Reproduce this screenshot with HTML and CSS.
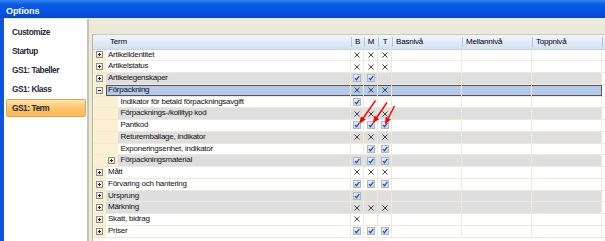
FILE: index.html
```html
<!DOCTYPE html>
<html>
<head>
<meta charset="utf-8">
<link rel="stylesheet" href="styles.css">
</head>
<body>
  <svg class="defs" width="0" height="0">
    <defs>
      <linearGradient id="cbg" x1="0" y1="0" x2="0" y2="1">
        <stop offset="0" stop-color="#eef2f8"/>
        <stop offset="1" stop-color="#c8d3e5"/>
      </linearGradient>
      <linearGradient id="tbg" x1="0" y1="0" x2="0" y2="1">
        <stop offset="0" stop-color="#ffffff"/>
        <stop offset="1" stop-color="#dcdcd4"/>
      </linearGradient>
      <symbol id="chk" viewBox="0 0 8 8">
        <rect x="0.5" y="0.5" width="7" height="7" fill="url(#cbg)" stroke="#aab7ce"/>
        <path d="M2 4.1 L3.5 5.8 L6.3 1.9" fill="none" stroke="#2350a6" stroke-width="1.3"/>
      </symbol>
      <symbol id="x" viewBox="0 0 6 6">
        <path d="M0.5 0.5 L5.5 5.5 M5.5 0.5 L0.5 5.5" stroke="#333" stroke-width="0.9"/>
      </symbol>
      <symbol id="plus" viewBox="0 0 7 7">
        <rect x="0.5" y="0.5" width="6" height="6" fill="url(#tbg)" stroke="#8c8c8c"/>
        <path d="M2 3.5 H5 M3.5 2 V5" stroke="#222"/>
      </symbol>
      <symbol id="minus" viewBox="0 0 7 7">
        <rect x="0.5" y="0.5" width="6" height="6" fill="url(#tbg)" stroke="#8c8c8c"/>
        <path d="M2 3.5 H5" stroke="#222"/>
      </symbol>
    </defs>
  </svg>

  <div class="titlebar">Options</div>

  <div class="main">
    <nav class="sidebar">
      <div class="nav-item">Customize</div>
      <div class="nav-item">Startup</div>
      <div class="nav-item">GS1: Tabeller</div>
      <div class="nav-item">GS1: Klass</div>
      <div class="nav-item active">GS1: Term</div>
    </nav>

    <div class="content">
      <div class="grid">
        <div class="hdr">
          <div class="h-term">Term</div>
          <div class="h-mid">B</div>
          <div class="h-mid">M</div>
          <div class="h-mid">T</div>
          <div>Basnivå</div>
          <div>Mellannivå</div>
          <div>Toppnivå</div>
          <div></div>
        </div>

        <div class="row">
          <div class="term"><span class="indent"><svg class="tog"><use href="#plus"/></svg></span><span class="label">Artikelidentitet</span></div>
          <div class="c"><svg class="ix"><use href="#x"/></svg></div>
          <div class="c"><svg class="ix"><use href="#x"/></svg></div>
          <div class="c"><svg class="ix"><use href="#x"/></svg></div>
          <div class="c"></div><div class="c"></div><div class="c last"></div><div class="fill"></div>
        </div>

        <div class="row">
          <div class="term"><span class="indent"><svg class="tog"><use href="#plus"/></svg></span><span class="label">Artikelstatus</span></div>
          <div class="c"><svg class="ix"><use href="#x"/></svg></div>
          <div class="c"><svg class="ix"><use href="#x"/></svg></div>
          <div class="c"><svg class="ix"><use href="#x"/></svg></div>
          <div class="c"></div><div class="c"></div><div class="c last"></div><div class="fill"></div>
        </div>

        <div class="row gray">
          <div class="term"><span class="indent"><svg class="tog"><use href="#plus"/></svg></span><span class="label">Artikelegenskaper</span></div>
          <div class="c"><svg class="cb"><use href="#chk"/></svg></div>
          <div class="c"><svg class="cb"><use href="#chk"/></svg></div>
          <div class="c"></div>
          <div class="c"></div><div class="c"></div><div class="c last"></div><div class="fill"></div>
        </div>

        <div class="row sel">
          <div class="term"><span class="indent"><svg class="tog"><use href="#minus"/></svg></span><span class="label">Förpackning</span></div>
          <div class="c"><svg class="ix"><use href="#x"/></svg></div>
          <div class="c"><svg class="ix"><use href="#x"/></svg></div>
          <div class="c"><svg class="ix"><use href="#x"/></svg></div>
          <div class="c"></div><div class="c"></div><div class="c last"></div><div class="fill"></div>
        </div>

        <div class="row child">
          <div class="term"><span class="indent"></span><span class="label">Indikator för betald förpackningsavgift</span></div>
          <div class="c"><svg class="cb"><use href="#chk"/></svg></div>
          <div class="c"></div>
          <div class="c"></div>
          <div class="c"></div><div class="c"></div><div class="c last"></div><div class="fill"></div>
        </div>

        <div class="row child gray">
          <div class="term"><span class="indent"></span><span class="label">Förpacknings-/kollityp kod</span></div>
          <div class="c"><svg class="ix"><use href="#x"/></svg></div>
          <div class="c"><svg class="ix"><use href="#x"/></svg></div>
          <div class="c"><svg class="ix"><use href="#x"/></svg></div>
          <div class="c"></div><div class="c"></div><div class="c last"></div><div class="fill"></div>
        </div>

        <div class="row child">
          <div class="term"><span class="indent"></span><span class="label">Pantkod</span></div>
          <div class="c"><svg class="cb"><use href="#chk"/></svg></div>
          <div class="c"><svg class="cb"><use href="#chk"/></svg></div>
          <div class="c"><svg class="cb"><use href="#chk"/></svg></div>
          <div class="c"></div><div class="c"></div><div class="c last"></div><div class="fill"></div>
        </div>

        <div class="row child gray">
          <div class="term"><span class="indent"></span><span class="label">Returemballage, indikator</span></div>
          <div class="c"><svg class="ix"><use href="#x"/></svg></div>
          <div class="c"><svg class="ix"><use href="#x"/></svg></div>
          <div class="c"><svg class="ix"><use href="#x"/></svg></div>
          <div class="c"></div><div class="c"></div><div class="c last"></div><div class="fill"></div>
        </div>

        <div class="row child">
          <div class="term"><span class="indent"></span><span class="label">Exponeringsenhet, indikator</span></div>
          <div class="c"></div>
          <div class="c"><svg class="cb"><use href="#chk"/></svg></div>
          <div class="c"><svg class="cb"><use href="#chk"/></svg></div>
          <div class="c"></div><div class="c"></div><div class="c last"></div><div class="fill"></div>
        </div>

        <div class="row child gray">
          <div class="term"><span class="indent"><svg class="tog"><use href="#plus"/></svg></span><span class="label">Förpackningsmaterial</span></div>
          <div class="c"><svg class="cb"><use href="#chk"/></svg></div>
          <div class="c"><svg class="cb"><use href="#chk"/></svg></div>
          <div class="c"><svg class="cb"><use href="#chk"/></svg></div>
          <div class="c"></div><div class="c"></div><div class="c last"></div><div class="fill"></div>
        </div>

        <div class="row">
          <div class="term"><span class="indent"><svg class="tog"><use href="#plus"/></svg></span><span class="label">Mått</span></div>
          <div class="c"><svg class="ix"><use href="#x"/></svg></div>
          <div class="c"><svg class="ix"><use href="#x"/></svg></div>
          <div class="c"><svg class="ix"><use href="#x"/></svg></div>
          <div class="c"></div><div class="c"></div><div class="c last"></div><div class="fill"></div>
        </div>

        <div class="row">
          <div class="term"><span class="indent"><svg class="tog"><use href="#plus"/></svg></span><span class="label">Förvaring och hantering</span></div>
          <div class="c"><svg class="cb"><use href="#chk"/></svg></div>
          <div class="c"><svg class="cb"><use href="#chk"/></svg></div>
          <div class="c"><svg class="cb"><use href="#chk"/></svg></div>
          <div class="c"></div><div class="c"></div><div class="c last"></div><div class="fill"></div>
        </div>

        <div class="row gray">
          <div class="term"><span class="indent"><svg class="tog"><use href="#plus"/></svg></span><span class="label">Ursprung</span></div>
          <div class="c"><svg class="cb"><use href="#chk"/></svg></div>
          <div class="c"></div>
          <div class="c"></div>
          <div class="c"></div><div class="c"></div><div class="c last"></div><div class="fill"></div>
        </div>

        <div class="row gray">
          <div class="term"><span class="indent"><svg class="tog"><use href="#plus"/></svg></span><span class="label">Märkning</span></div>
          <div class="c"><svg class="ix"><use href="#x"/></svg></div>
          <div class="c"><svg class="ix"><use href="#x"/></svg></div>
          <div class="c"><svg class="ix"><use href="#x"/></svg></div>
          <div class="c"></div><div class="c"></div><div class="c last"></div><div class="fill"></div>
        </div>

        <div class="row">
          <div class="term"><span class="indent"><svg class="tog"><use href="#plus"/></svg></span><span class="label">Skatt, bidrag</span></div>
          <div class="c"><svg class="ix"><use href="#x"/></svg></div>
          <div class="c"></div>
          <div class="c"></div>
          <div class="c"></div><div class="c"></div><div class="c last"></div><div class="fill"></div>
        </div>

        <div class="row">
          <div class="term"><span class="indent"><svg class="tog"><use href="#plus"/></svg></span><span class="label">Priser</span></div>
          <div class="c"><svg class="cb"><use href="#chk"/></svg></div>
          <div class="c"><svg class="cb"><use href="#chk"/></svg></div>
          <div class="c"><svg class="cb"><use href="#chk"/></svg></div>
          <div class="c"></div><div class="c"></div><div class="c last"></div><div class="fill"></div>
        </div>
      </div>
    </div>
  </div>

  <!-- annotation arrows drawn over the grid -->
  <svg class="arrows" width="605" height="241">
    <defs>
      <marker id="ah" markerWidth="7" markerHeight="6" refX="5" refY="3" orient="auto" markerUnits="userSpaceOnUse">
        <path d="M0 0 L7 3 L0 6 Z" fill="#f00"/>
      </marker>
    </defs>
    <line x1="375.5" y1="100.5" x2="360.5" y2="122" stroke="#f00" stroke-width="1.4" marker-end="url(#ah)"/>
    <line x1="387" y1="102.5" x2="374" y2="121.5" stroke="#f00" stroke-width="1.4" marker-end="url(#ah)"/>
    <line x1="394.5" y1="106" x2="386" y2="122.5" stroke="#f00" stroke-width="1.4" marker-end="url(#ah)"/>
  </svg>
</body>
</html>
```

FILE: styles.css
```css
* { box-sizing: border-box; }

html, body { margin: 0; }

body {
  position: relative;
  width: 605px;
  height: 241px;
  overflow: hidden;
  background: #ece9d8;
  font-family: "Liberation Sans", Arial, sans-serif;
}

.defs {
  position: absolute;
  width: 0;
  height: 0;
}

.titlebar {
  height: 18px;
  padding: 3px 0 0 6px;
  line-height: 16px;
  font-size: 9px;
  font-weight: bold;
  letter-spacing: -0.1px;
  color: #fff;
  background: linear-gradient(#3488f2, #0a5ae6 25%, #0453e0 70%, #0a47c8);
}

.main {
  display: flex;
  height: 223px;
  border-left: 4px solid #0d55de;
}

/* left menu */
.sidebar {
  width: 85px;
  flex: none;
  margin-top: 1px;
  padding-top: 4px;
  background: #fff;
  border-right: 2px solid #c7c4b4;
}

.nav-item {
  height: 18px;
  margin: 0 1px 1px 2px;
  padding-left: 5px;
  border: 1px solid transparent;
  border-radius: 2px;
  line-height: 16px;
  font-size: 8.3px;
  font-weight: bold;
  letter-spacing: -0.45px;
  color: #1f2a3c;
}

.nav-item.active {
  background: linear-gradient(#fee4a9, #fcc56c 50%, #fbb955);
  border-color: #e2a458;
}

/* term grid */
.content {
  flex: 1;
  padding: 16px 0 0 3px;
}

.grid {
  height: 100%;
  background: #fff;
  border-left: 1px solid #b9b6a4;
  border-top: 1px solid #c3c8d2;
  font-size: 8px;
  color: #111;
}

.hdr,
.row {
  display: grid;
  grid-template-columns: 258px 13px 14px 14px 70px 70px 70px 1fr;
}

.hdr {
  height: 14.5px;
  line-height: 13.5px;
  border-bottom: 1px solid #c9d5e6;
  background: linear-gradient(#f2f6fc, #d4e0f2);
  letter-spacing: -0.2px;
  color: #000;
}

.hdr > div {
  padding-left: 4px;
  white-space: nowrap;
  background: linear-gradient(#b3c4de, #b3c4de) no-repeat 0 50% / 1px 10px;
}

.hdr > .h-term {
  padding-left: 17px;
  background: none;
}

.hdr > .h-mid {
  padding-left: 0;
  text-align: center;
}

.row {
  height: 11.75px;
  line-height: 10.75px;
  border-bottom: 1px solid #efead6;
  letter-spacing: -0.25px;
  background: #fff;
}

.row.gray { background: #dedede; }
.row.sel { background: #b5c9ea; }

.term {
  display: flex;
  border-right: 1px solid #efead6;
}

.indent {
  flex: none;
  width: 13px;
  padding-right: 3px;
  display: flex;
  align-items: center;
  justify-content: flex-end;
  background: #fcf0d3;
}

.child .indent { width: 25px; }

.label {
  flex: 1;
  padding-left: 2px;
  white-space: nowrap;
  overflow: hidden;
}

.child .label { padding-left: 2.5px; }

.c {
  display: flex;
  align-items: center;
  justify-content: center;
  border-right: 1px solid #efead6;
}

.sel .label,
.sel .c {
  box-shadow: inset 0 1px #555, inset 0 -1px #555;
}

.sel .label {
  box-shadow: inset 1px 0 #555, inset 0 1px #555, inset 0 -1px #555;
}

.sel .c.last { border-right-color: #555; }

.fill { background: #fff; }

.tog { width: 7px; height: 7px; }
.cb { width: 8px; height: 8px; }
.ix { width: 6px; height: 6px; }

.arrows {
  position: absolute;
  left: 0;
  top: 0;
  pointer-events: none;
}
```
